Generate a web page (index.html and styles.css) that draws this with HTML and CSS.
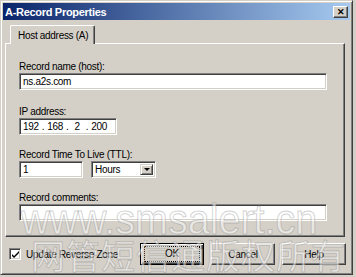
FILE: index.html
```html
<!DOCTYPE html>
<html lang="en">
<head>
    <meta charset="UTF-8">
    <title>A-Record Properties</title>
    <link rel="stylesheet" href="styles.css">
</head>
<body>
    <div class="window">
        <div class="titlebar">
            <span class="title">A-Record Properties</span>
            <span class="close">&#x2715;</span>
        </div>

        <div class="tabs">
            <div class="tab">Host address (A)</div>
        </div>

        <div class="panel">
            <div class="field">
                <label>Record name (host):</label>
                <div class="input wide">ns.a2s.com</div>
            </div>
            <div class="field">
                <label>IP address:</label>
                <div class="input ip">
                    <span>192</span><span>.</span><span>168</span><span>.</span><span class="oct">2</span><span>.</span><span>200</span>
                </div>
            </div>
            <div class="field">
                <label>Record Time To Live (TTL):</label>
                <div class="ttl-row">
                    <div class="input ttl">1</div>
                    <div class="input select">
                        <span>Hours</span>
                        <span class="drop"><span class="arrow"></span></span>
                    </div>
                </div>
            </div>
            <div class="field">
                <label>Record comments:</label>
                <div class="input wide comment"></div>
            </div>
        </div>

        <div class="footer">
            <div class="check-row">
                <span class="checkbox">
                    <svg width="9" height="9" viewBox="0 0 9 9"><path d="M1 4 L3 6 L8 1 L8 3 L3 8 L1 6 Z" fill="#000"/></svg>
                </span>
                <span>Update Reverse Zone</span>
            </div>
            <div class="buttons">
                <div class="btn default"><span class="focus">OK</span></div>
                <div class="btn">Cancel</div>
                <div class="btn">Help</div>
            </div>
        </div>

        <div class="watermark">
            <div class="wm-url">www.smsalert.cn</div>
            <div class="wm-cn">网管短信通版权所有</div>
        </div>
    </div>
</body>
</html>
```

FILE: styles.css
```css
* {
    box-sizing: border-box;
    margin: 0;
    padding: 0;
}

body {
    background: #d4d0c8;
    font-family: 'Liberation Sans', Arial, sans-serif;
    font-size: 10px;
    letter-spacing: -0.3px;
    color: #000;
    overflow: hidden;
}

.window {
    position: relative;
    width: 353px;
    height: 275px;
    background: #d4d0c8;
    border: 1px solid;
    border-color: #d4d0c8 #404040 #404040 #d4d0c8;
    box-shadow: inset 1px 1px #fff, inset -1px -1px #808080;
    padding: 2px;
    overflow: hidden;
}

.titlebar {
    height: 17px;
    background: linear-gradient(to right, #0a246a, #a6caf0);
    display: flex;
    align-items: center;
    justify-content: space-between;
    padding: 0 2px 0 2px;
}

.title {
    color: #fff;
    font-weight: bold;
    font-size: 11px;
}

.close {
    width: 15px;
    height: 12px;
    background: #d4d0c8;
    border: 1px solid;
    border-color: #fff #404040 #404040 #fff;
    box-shadow: inset -1px -1px #808080;
    font-size: 9px;
    font-weight: bold;
    line-height: 10px;
    text-align: center;
    letter-spacing: 0;
}

.tabs {
    display: flex;
    padding: 5px 0 0 7px;
}

.tab {
    height: 19px;
    padding: 4px 6px 0 7px;
    border: 1px solid;
    border-bottom: none;
    border-color: #fff #404040 #fff #fff;
    border-radius: 2px 2px 0 0;
    box-shadow: inset -1px 0 #808080;
    background: #d4d0c8;
    position: relative;
    z-index: 1;
    margin-bottom: -1px;
}

.panel {
    margin: 0 5px 0 2px;
    height: 194px;
    border: 1px solid;
    border-color: #fff #404040 #404040 #fff;
    box-shadow: inset -1px -1px #808080;
    padding: 17px 0 0 13px;
}

.field label {
    display: block;
    height: 12px;
    line-height: 12px;
}

.field + .field {
    margin-top: 14px;
}

.field:nth-child(2) {
    margin-top: 16px;
}

.input {
    height: 17px;
    background: #fff;
    border: 1px solid;
    border-color: #808080 #fff #fff #808080;
    box-shadow: inset 1px 1px #404040, inset -1px -1px #d4d0c8;
    padding: 2px 3px;
    line-height: 12px;
}

.wide {
    width: 308px;
}

.ip {
    width: 98px;
    display: flex;
    gap: 3px;
}

.ip .oct {
    padding: 0 3px;
}

.ttl-row {
    display: flex;
    gap: 8px;
}

.ttl {
    width: 64px;
}

.select {
    width: 65px;
    display: flex;
    justify-content: space-between;
    padding: 2px 2px 2px 3px;
}

.drop {
    width: 13px;
    height: 11px;
    background: #d4d0c8;
    border: 1px solid;
    border-color: #d4d0c8 #404040 #404040 #d4d0c8;
    box-shadow: inset 1px 1px #fff, inset -1px -1px #808080;
    display: flex;
    align-items: center;
    justify-content: center;
}

.arrow {
    width: 0;
    height: 0;
    border-left: 3px solid transparent;
    border-right: 3px solid transparent;
    border-top: 3px solid #000;
}

.footer {
    display: flex;
    justify-content: space-between;
    align-items: center;
    padding: 6px 4px 0 6px;
}

.check-row {
    display: flex;
    align-items: center;
    gap: 5px;
}

.checkbox {
    width: 12px;
    height: 12px;
    background: #fff;
    border: 1px solid;
    border-color: #808080 #fff #fff #808080;
    box-shadow: inset 1px 1px #404040, inset -1px -1px #d4d0c8;
    display: flex;
    align-items: center;
    justify-content: center;
}

.buttons {
    display: flex;
    gap: 7px;
}

.btn {
    width: 64px;
    height: 22px;
    border: 1px solid;
    border-color: #fff #404040 #404040 #fff;
    box-shadow: inset -1px -1px #808080;
    display: flex;
    align-items: center;
    justify-content: center;
}

.btn.default {
    border: 1px solid #000;
    box-shadow: inset 1px 1px #fff, inset -1px -1px #404040, inset -2px -2px #808080;
}

.btn .focus {
    outline: 1px dotted #000;
    width: 54px;
    height: 14px;
    line-height: 14px;
    text-align: center;
}

.watermark {
    position: absolute;
    left: 0;
    top: 0;
    width: 100%;
    height: 100%;
    pointer-events: none;
    letter-spacing: 0;
    color: rgba(255, 255, 255, 0.5);
    -webkit-text-stroke: 1px rgba(120, 120, 120, 0.35);
}

.wm-url {
    position: absolute;
    left: 20px;
    top: 194px;
    font-size: 42px;
    line-height: 50px;
    white-space: nowrap;
    transform: scaleX(0.94);
    transform-origin: left top;
}

.wm-cn {
    position: absolute;
    left: 30px;
    top: 236px;
    font-family: 'Liberation Sans', 'Noto Sans CJK SC', sans-serif;
    font-size: 34px;
    letter-spacing: 1px;
    line-height: 40px;
    white-space: nowrap;
}
```
